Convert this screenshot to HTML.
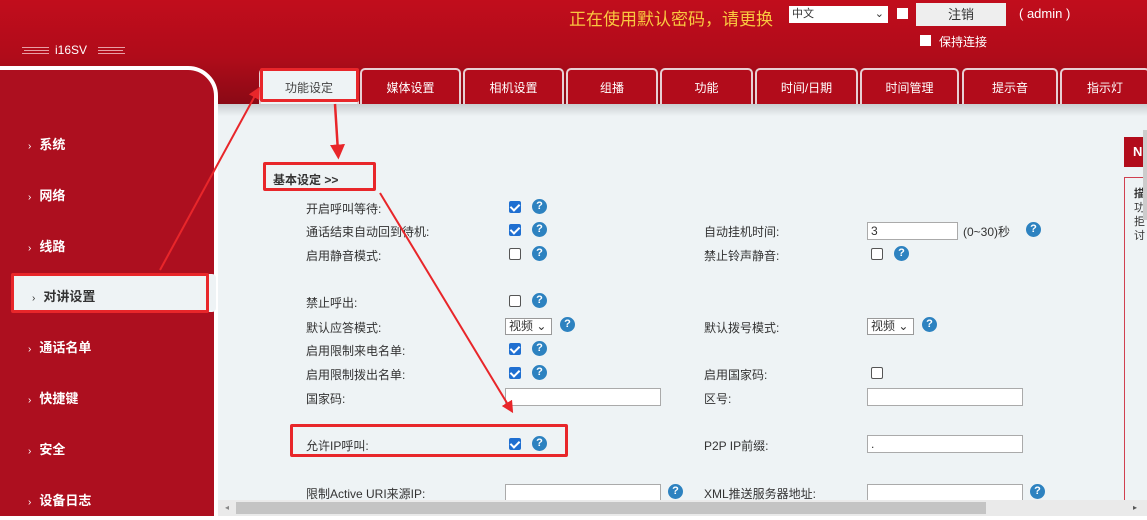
<!DOCTYPE html>
<html><head><meta charset="utf-8"><style>
*{margin:0;padding:0;box-sizing:border-box}
body{width:1147px;height:520px;overflow:hidden;position:relative;background:#eef3f5;font-family:"Liberation Sans","Noto Sans CJK SC",sans-serif;font-size:12px;color:#333}
.hdr{position:absolute;left:0;top:0;width:1147px;height:104px;background:linear-gradient(#c10d1c,#b00c1a 55%,#8a0915)}
.shadow{position:absolute;left:218px;top:104px;width:929px;height:12px;background:linear-gradient(#c9cdd0,#eef3f5)}
.side{position:absolute;left:-4px;top:66px;width:222px;height:454px;background:#ad0f1f;border:4px solid #fff;border-top-right-radius:30px}
.nav{position:absolute;left:28px;color:#fff;font-weight:bold;font-size:13px}
.nav b{font-weight:normal;font-size:10px;margin-right:8px}
.tab{position:absolute;top:68px;height:36px;border:2px solid #e8d0d4;border-bottom:none;border-radius:5px 5px 0 0;background:#b20c1b;color:#fff;text-align:center;line-height:36px;font-size:12px}
.lbl{position:absolute;font-size:12px;color:#333}
.cb{position:absolute;width:12px;height:12px;border-radius:2px;background:#1f6fd1}
.cb::after{content:"";position:absolute;left:3px;top:1px;width:4px;height:7px;border:solid #fff;border-width:0 2px 2px 0;transform:rotate(45deg)}
.ub{position:absolute;width:12px;height:12px;border:1px solid #555;border-radius:2px;background:#fff}
.q{position:absolute;width:15px;height:15px;border-radius:50%;background:#2d82c0;color:#fff;font-size:11px;font-weight:bold;text-align:center;line-height:15px}
.inp{position:absolute;height:18px;background:#fff;border:1px solid #aaa;font-size:12px;padding-left:3px;line-height:16px}
.sel{position:absolute;height:17px;background:#fff;border:1px solid #999;font-size:12px;padding-left:3px;line-height:15px}
.rb{position:absolute;border:3px solid #e8262a;border-radius:2px}
.ln{position:absolute;height:1px;background:#e8a0a6}
</style></head><body>
<div class="hdr"></div>
<div class="ln" style="left:22px;top:47px;width:27px"></div><div class="ln" style="left:24px;top:50px;width:25px"></div><div class="ln" style="left:22px;top:53px;width:27px"></div>
<div style="position:absolute;left:55px;top:43px;color:#fff;font-size:12px">i16SV</div>
<div class="ln" style="left:98px;top:47px;width:27px"></div><div class="ln" style="left:98px;top:50px;width:25px"></div><div class="ln" style="left:98px;top:53px;width:27px"></div>
<div style="position:absolute;left:569px;top:5px;color:#f9c840;font-size:17px">正在使用默认密码，请更换</div>
<div style="position:absolute;left:789px;top:6px;width:99px;height:17px;background:#fff;font-size:11px;padding-left:3px;line-height:16px">中文<span style="position:absolute;right:4px;top:0">⌄</span></div>
<div style="position:absolute;left:897px;top:8px;width:11px;height:11px;background:#fff"></div>
<div style="position:absolute;left:916px;top:3px;width:90px;height:23px;background:#eee;text-align:center;line-height:23px;font-size:13px">注销</div>
<div style="position:absolute;left:1019px;top:6px;color:#fff;font-size:13px">( admin )</div>
<div style="position:absolute;left:920px;top:35px;width:11px;height:11px;background:#fff"></div>
<div style="position:absolute;left:939px;top:33px;color:#fff;font-size:12px">保持连接</div>

<div class="side"></div>
<div class="nav" style="top:134px"><b>›</b>系统</div>
<div class="nav" style="top:185px"><b>›</b>网络</div>
<div class="nav" style="top:236px"><b>›</b>线路</div>
<div style="position:absolute;left:12px;top:274px;width:204px;height:38px;background:#eef3f5;border-radius:4px"></div>
<div class="nav" style="top:286px;left:32px;color:#333"><b>›</b>对讲设置</div>
<div class="nav" style="top:337px"><b>›</b>通话名单</div>
<div class="nav" style="top:388px"><b>›</b>快捷键</div>
<div class="nav" style="top:439px"><b>›</b>安全</div>
<div class="nav" style="top:490px"><b>›</b>设备日志</div>

<div class="tab" style="left:259px;width:100px;background:#eef3f5;color:#444">功能设定</div>
<div class="tab" style="left:360px;width:101px">媒体设置</div>
<div class="tab" style="left:463px;width:101px">相机设置</div>
<div class="tab" style="left:566px;width:92px">组播</div>
<div class="tab" style="left:660px;width:93px">功能</div>
<div class="tab" style="left:755px;width:103px">时间/日期</div>
<div class="tab" style="left:860px;width:99px">时间管理</div>
<div class="tab" style="left:962px;width:96px">提示音</div>
<div class="tab" style="left:1060px;width:90px">指示灯</div>
<div class="shadow"></div>

<div style="position:absolute;left:273px;top:171px;font-weight:bold;font-size:12px">基本设定 &gt;&gt;</div>

<div class="lbl" style="left:306px;top:200px">开启呼叫等待:</div><div class="cb" style="left:509px;top:201px"></div><div class="q" style="left:532px;top:199px">?</div>
<div class="lbl" style="left:306px;top:223px">通话结束自动回到待机:</div><div class="cb" style="left:509px;top:224px"></div><div class="q" style="left:532px;top:222px">?</div>
<div class="lbl" style="left:306px;top:247px">启用静音模式:</div><div class="ub" style="left:509px;top:248px"></div><div class="q" style="left:532px;top:246px">?</div>
<div class="lbl" style="left:306px;top:294px">禁止呼出:</div><div class="ub" style="left:509px;top:295px"></div><div class="q" style="left:532px;top:293px">?</div>
<div class="lbl" style="left:306px;top:319px">默认应答模式:</div><div class="sel" style="left:505px;top:318px;width:47px">视频 ⌄</div><div class="q" style="left:560px;top:317px">?</div>
<div class="lbl" style="left:306px;top:342px">启用限制来电名单:</div><div class="cb" style="left:509px;top:343px"></div><div class="q" style="left:532px;top:341px">?</div>
<div class="lbl" style="left:306px;top:366px">启用限制拨出名单:</div><div class="cb" style="left:509px;top:367px"></div><div class="q" style="left:532px;top:365px">?</div>
<div class="lbl" style="left:306px;top:390px">国家码:</div><div class="inp" style="left:505px;top:388px;width:156px"></div>
<div class="lbl" style="left:306px;top:437px">允许IP呼叫:</div><div class="cb" style="left:509px;top:438px"></div><div class="q" style="left:532px;top:436px">?</div>
<div class="lbl" style="left:306px;top:485px">限制Active URI来源IP:</div><div class="inp" style="left:505px;top:484px;width:156px"></div><div class="q" style="left:668px;top:484px">?</div>

<div class="lbl" style="left:704px;top:223px">自动挂机时间:</div><div class="inp" style="left:867px;top:222px;width:91px">3</div><div class="lbl" style="left:963px;top:223px">(0~30)秒</div><div class="q" style="left:1026px;top:222px">?</div>
<div class="lbl" style="left:704px;top:247px">禁止铃声静音:</div><div class="ub" style="left:871px;top:248px"></div><div class="q" style="left:894px;top:246px">?</div>
<div class="lbl" style="left:704px;top:319px">默认拨号模式:</div><div class="sel" style="left:867px;top:318px;width:47px">视频 ⌄</div><div class="q" style="left:922px;top:317px">?</div>
<div class="lbl" style="left:704px;top:366px">启用国家码:</div><div class="ub" style="left:871px;top:367px"></div>
<div class="lbl" style="left:704px;top:390px">区号:</div><div class="inp" style="left:867px;top:388px;width:156px"></div>
<div class="lbl" style="left:704px;top:437px">P2P IP前缀:</div><div class="inp" style="left:867px;top:435px;width:156px">.</div>
<div class="lbl" style="left:704px;top:485px">XML推送服务器地址:</div><div class="inp" style="left:867px;top:484px;width:156px"></div><div class="q" style="left:1030px;top:484px">?</div>

<div style="position:absolute;left:1124px;top:137px;width:23px;height:30px;background:#b20c1b;color:#fff;font-weight:bold;line-height:30px;padding-left:9px;font-size:13px">N</div>
<div style="position:absolute;left:1124px;top:177px;width:30px;height:330px;border:1px solid #d04050;background:#eef3f5;padding:9px 0 0 9px;font-size:11px;line-height:14px"><b>描</b><br>功<br>拒<br>讨</div>
<div style="position:absolute;left:1143px;top:130px;width:4px;height:90px;background:#ccc"></div>

<div style="position:absolute;left:218px;top:500px;width:929px;height:16px;background:#eaeaea"></div>
<div style="position:absolute;left:236px;top:502px;width:750px;height:12px;background:#c4c4c4"></div>
<div style="position:absolute;left:225px;top:503px;font-size:8px;color:#888">◂</div>
<div style="position:absolute;left:1133px;top:503px;font-size:8px;color:#555">▸</div>
<div style="position:absolute;left:0;top:516px;width:1147px;height:4px;background:#fff"></div>

<div class="rb" style="left:260px;top:68px;width:99px;height:34px"></div>
<div class="rb" style="left:263px;top:162px;width:113px;height:29px"></div>
<div class="rb" style="left:11px;top:273px;width:198px;height:40px"></div>
<div class="rb" style="left:290px;top:424px;width:278px;height:33px"></div>
<svg style="position:absolute;left:0;top:0" width="1147" height="520">
<defs><marker id="a" markerWidth="6" markerHeight="6" refX="3" refY="3" orient="auto"><path d="M0,0L6,3L0,6z" fill="#e8262a"/></marker></defs>
<g stroke="#e8262a" fill="none">
<line x1="160" y1="270" x2="257" y2="92" stroke-width="2" marker-end="url(#a)"/>
<line x1="335" y1="104" x2="338" y2="152" stroke-width="2.5" marker-end="url(#a)"/>
<line x1="380" y1="193" x2="510" y2="408" stroke-width="2" marker-end="url(#a)"/>
</g></svg>
</body></html>
